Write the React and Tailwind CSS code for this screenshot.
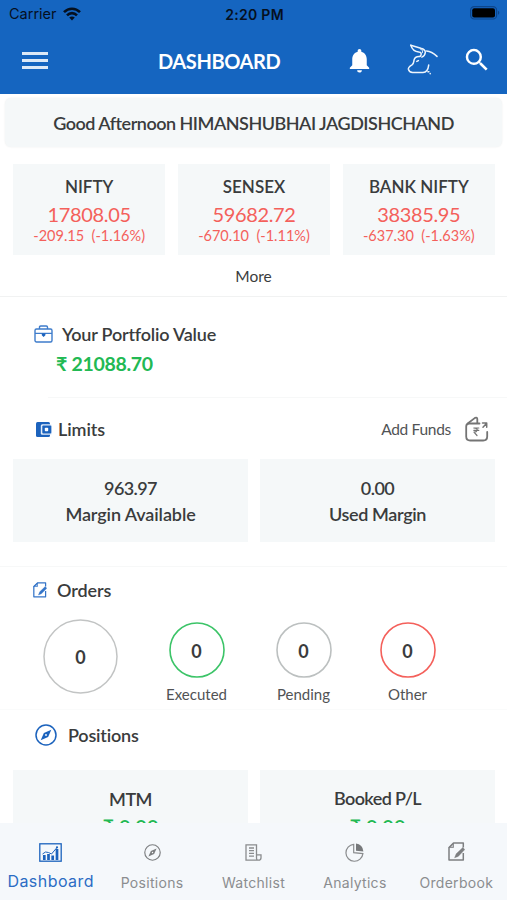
import { useState } from "react";
import { MdNotifications, MdSearch } from "react-icons/md";

// Market indices shown at the top of the dashboard
const indices = [
  { name: "NIFTY", value: "17808.05", change: "-209.15", percent: "(-1.16%)" },
  { name: "SENSEX", value: "59682.72", change: "-670.10", percent: "(-1.11%)" },
  { name: "BANK NIFTY", value: "38385.95", change: "-637.30", percent: "(-1.63%)" },
];

const orders = [
  { label: "Executed", count: 0, ring: "#3cc468", box: "w-[107px]" },
  { label: "Pending", count: 0, ring: "#bcc0c0", box: "w-[107px]" },
  { label: "Other", count: 0, ring: "#f4605b", box: "w-[101px]" },
];

/* ---------- Icons ---------- */

function WifiIcon() {
  return (
    <svg width="18" height="14" viewBox="0 0 18 14" fill="none" stroke="#05101f" strokeWidth="2.6">
      <path d="M1 5.2C5.6 .6 12.4 .6 17 5.2" />
      <path d="M4 8.3c2.9-2.9 7.1-2.9 10 0" />
      <path d="M9 13.4 6.2 10.6c1.6-1.5 4-1.5 5.6 0z" fill="#05101f" stroke="none" />
    </svg>
  );
}

function BatteryIcon() {
  return (
    <svg width="30" height="14" viewBox="0 0 30 14">
      <rect x=".6" y=".6" width="26" height="12.4" rx="3.6" fill="none" stroke="#0d468c" strokeWidth="1.2" />
      <rect x="2.2" y="2.2" width="22.8" height="9.2" rx="2" fill="#000" />
      <path d="M28 4.8c1.8.8 1.8 3.2 0 4z" fill="#0d468c" />
    </svg>
  );
}

function BullIcon() {
  return (
    <svg width="33" height="32" viewBox="0 0 33 32" fill="none" stroke="#eef5fc" strokeWidth="1.5" strokeLinecap="round" strokeLinejoin="round">
      <path d="M5.8 1.2 15.8 4.3c3 .8 4.7 2 4.5 4.2-.2 2.2-1.6 3.9-3.5 4.6" />
      <path d="M5.8 1.2c1.2 3.8 3.6 6.3 8 6.9 2.6.2 3.2 2 1.4 4.2" />
      <path d="M15.6 5.2c2 .6 2.4 2 1.7 3.6" strokeWidth="1" />
      <path d="M21.6 6.9c3.8.2 7 2.2 10.4 5.5" />
      <path d="M14.6 12.6c-3.3-.2-5 1.2-5.6 3.6-.4 2.3-.2 3.4-2 4.6-2.4 1.5-4 2.6-3.6 4.4.5 1.8 1.8 3 4.2 3.300h10.400c3.200-.2 5.200-3 5.700-7.400" />
      <path d="M11.8 17.4l1.6-.8M22.900 27.800h1M25.200 29.500v.2" />
    </svg>
  );
}

function BriefcaseIcon() {
  return (
    <svg width="19" height="18" viewBox="0 0 19 18" fill="none" stroke="#3e7ccb" strokeWidth="1.4">
      <rect x="1" y="4" width="17" height="13" rx="1.5" />
      <path d="M5.5 4V2.2Q5.5 1 6.7 1h5.6q1.2 0 1.2 1.2V4M1 8.4h17" />
      <path d="M7.8 8.4h3.6v1.8L9.6 12l-1.8-1.8z" fill="#1c63bd" stroke="none" />
    </svg>
  );
}

function WalletIcon() {
  return (
    <svg width="16" height="15" viewBox="0 0 16 15">
      <rect width="14" height="15" rx="1.5" fill="#1c63bd" />
      <rect x="4.8" y="2.3" width="11.2" height="10.4" rx="1.5" fill="#e4eefa" />
      <rect x="6.3" y="3.5" width="9" height="8" rx="1" fill="#1c63bd" />
      <rect x="8.8" y="5.8" width="3.4" height="3.4" rx=".8" fill="#fff" />
    </svg>
  );
}

function AddFundsIcon() {
  return (
    <svg width="24" height="26" viewBox="0 0 24 26" fill="none" stroke="#747474" strokeWidth="1.8" strokeLinecap="round" strokeLinejoin="round">
      <path d="M14.5 7.5H4.2Q1.2 7.5 1.2 10.5v10q0 4 4 4h13q4 0 4-4V16" />
      <path d="M3 7.2 10 1.9q2.3-1 2.3 1.2V7.2" />
      <path d="M18 11.2 21.6 7.3M17.5 7h4.2v4.2" strokeWidth="1.5" />
      <path d="M8.8 12h5M8.8 14.3h5M8.8 12q3.8 0 3.3 2.3-.5 1.9-3.1 1.9l3 3.3" strokeWidth="1.2" />
    </svg>
  );
}

// Sheet of paper with a pen, shared by the orders title and the tab bar
function OrderSheetIcon({ size, color }) {
  return (
    <svg width={size} height={size * 1.12} viewBox="0 0 17 19" fill="none" stroke={color} strokeWidth="1.5" strokeLinejoin="round">
      <path d="M15.3 11V18H1V5.5L5.5 1h9.8v4.5" />
      <path d="M1 5.5h4.5V1z" fill={color} fillOpacity=".45" strokeWidth=".8" />
      <path d="M6.6 15.8 8.2 11.8l6.6-6.2 2 2-6.6 6.8z" fill={color} strokeWidth=".4" />
    </svg>
  );
}

function CompassIcon({ size, color, width }) {
  return (
    <svg width={size} height={size} viewBox="0 0 22 22" fill="none" stroke={color} strokeWidth={width}>
      <circle cx="11" cy="11" r="10" />
      <path d="M16.300 5.700 8.900 8.900 5.700 16.300l7.400-3.200z" fill={color} stroke="none" />
      <circle cx="11" cy="11" r=".9" fill="#fff" stroke="none" />
    </svg>
  );
}

function ChartIcon() {
  return (
    <svg width="23" height="19" viewBox="0 0 23 19" fill="none" stroke="#1c63bd" strokeWidth="1.3">
      <rect x=".8" y=".8" width="21.4" height="17.4" />
      <path d="M5.3 17v-5M9.5 17v-6M13.700 17v-4.500M18 17V6" strokeWidth="2.7" />
      <path d="m3.5 11 3-2 3 .5 3 1.5 5.500-6.500" strokeWidth="1" />
      <circle cx="18" cy="4.3" r="1.1" fill="#1c63bd" stroke="none" />
    </svg>
  );
}

function WatchlistIcon() {
  return (
    <svg width="17" height="17" viewBox="0 0 17 17" fill="none" stroke="#8a8c8e" strokeWidth="1.3">
      <path d="M11.5 10.500V.8H1v15.400h12.500q2.500 0 2.500-2.500v-2.900h-4.500v3.400q0 2 1.500 2" />
      <path d="M4 4h5M4 6.700h5M4 9.400h5M4 12.100h5" />
    </svg>
  );
}

function PieIcon() {
  return (
    <svg width="19" height="19" viewBox="0 0 19 19" fill="none" stroke="#8a8c8e" strokeWidth="1.2">
      <path d="M8.7 1.3a8.5 8.5 0 1 0 9.2 9.3l-9.2-.9z" />
      <path d="M11 .6a8 8 0 0 1 7.4 7.8L11 7.8z" fill="#77797b" stroke="none" />
    </svg>
  );
}

const tabs = [
  { name: "Dashboard", icon: <ChartIcon /> },
  { name: "Positions", icon: <CompassIcon size={17} color="#7d7f81" width={1.5} /> },
  { name: "Watchlist", icon: <WatchlistIcon /> },
  { name: "Analytics", icon: <PieIcon /> },
  { name: "Orderbook", icon: <OrderSheetIcon size={17} color="#7d7f81" /> },
];

/* ---------- Sections ---------- */

function Header() {
  return (
    <header className="h-[94px] shrink-0 bg-[#1565c0]">
      {/* Phone status bar */}
      <div className="grid h-7 grid-cols-3 items-center pl-[9px] pr-[7px] font-['Inter'] text-[#05101f]">
        <div className="flex items-center gap-[6px] text-[14.5px]">
          Carrier
          <WifiIcon />
        </div>
        <span className="text-center text-[14px] font-semibold tracking-[0.3px]">2:20 PM</span>
        <div className="flex justify-end pb-[2px]">
          <BatteryIcon />
        </div>
      </div>

      <div className="flex h-[64px] items-center text-white">
        <button className="ml-[22px] flex w-[26px] flex-col gap-[4px]" aria-label="Menu">
          <span className="h-[3px] bg-[#dce9f7]"></span>
          <span className="h-[3px] bg-[#dce9f7]"></span>
          <span className="h-[3px] bg-[#dce9f7]"></span>
        </button>
        <h1 className="ml-[110px] w-[122px] whitespace-nowrap pt-px text-[20px] font-bold leading-6 tracking-[-0.4px]">DASHBOARD</h1>
        <MdNotifications className="ml-[65px] size-[29px]" />
        <div className="ml-[31px]">
          <BullIcon />
        </div>
        <MdSearch className="ml-[24px] size-[30px]" />
      </div>
    </header>
  );
}

function IndexCard({ item }) {
  return (
    <div className="flex h-[91px] flex-1 flex-col items-center bg-[#f5f8f9] pt-[12px]">
      <h2 className="text-[17px] font-semibold leading-[22px]">{item.name}</h2>
      <p className="mt-[5px] text-[20px] leading-[22px] tracking-[-0.35px] text-[#f4605b]">{item.value}</p>
      <p className="mt-px text-[14.5px] leading-[19px] text-[#f4605b]">
        {item.change}&nbsp; {item.percent}
      </p>
    </div>
  );
}

// Round counter, the ring colour depends on the kind of order
function Counter({ size, color, width, children }) {
  return (
    <div className="grid place-items-center self-start text-[18px] font-bold">
      <svg className="col-start-1 row-start-1" width={size} height={size} fill="none" stroke={color} strokeWidth={width}>
        <circle cx={size / 2} cy={size / 2} r={size / 2 - 1} />
      </svg>
      <span className="col-start-1 row-start-1 pt-px leading-none">{children}</span>
    </div>
  );
}

export default function App() {
  const [activeTab, setActiveTab] = useState("Dashboard");

  return (
    <div className="flex h-[900px] w-[507px] flex-col overflow-hidden bg-white font-['Lato',sans-serif] text-[#3a3c3d] [font-variant-ligatures:none]">
      <Header />

      <main className="flex min-h-0 flex-1 flex-col overflow-hidden *:shrink-0">
        {/* Greeting */}
        <div className="mx-[5px] mt-[4px] flex h-[49px] items-center justify-center whitespace-nowrap rounded-md bg-[#f5f8f9] pt-px text-[18px] font-semibold tracking-[-0.5px] shadow-[0_0_2px_rgba(0,0,0,0.08)]">
          Good Afternoon HIMANSHUBHAI JAGDISHCHAND
        </div>

        {/* Market indices */}
        <section className="border-b border-[#f1f2f2]">
          <div className="ml-[13px] mr-3 mt-[17px] flex gap-[12.5px]">
            {indices.map((item) => (
              <IndexCard key={item.name} item={item} />
            ))}
          </div>
          <button className="block h-[41px] w-full text-[15.5px] leading-[43px]">More</button>
        </section>

        {/* Portfolio */}
        <section className="h-[101px] pt-[25px]">
          <div className="flex h-6 items-center gap-[9px] pl-[34px]">
            <BriefcaseIcon />
            <h2 className="text-[18px] font-semibold tracking-[-0.2px]">Your Portfolio Value</h2>
          </div>
          <p className="mt-[6px] pl-[56px] text-[19.5px] font-bold leading-6 tracking-[-0.3px] text-[#22b953]">₹ 21088.70</p>
          <hr className="ml-[48px] mt-[21px] border-[#f7f8f8]" />
        </section>

        {/* Limits */}
        <section className="h-[169px] border-b border-[#f7f8f8] pt-[18px]">
          <div className="flex h-[26px] items-center pl-[36px] pr-[18px]">
            <WalletIcon />
            <h2 className="ml-[6px] flex-1 text-[18px] font-semibold tracking-[-0.1px]">Limits</h2>
            <span className="mr-[14px] pt-px text-[15.5px] tracking-[-0.3px] text-[#515355]">Add Funds</span>
            <AddFundsIcon />
          </div>
          <div className="ml-[13px] mr-3 mt-[17px] flex gap-3 text-center text-[18px] font-semibold leading-[26px]">
            <div className="h-[83px] flex-1 bg-[#f5f8f9] pt-[16px]">
              <p className="tracking-[-0.6px]">963.97</p>
              <p className="tracking-[-0.1px]">Margin Available</p>
            </div>
            <div className="h-[83px] flex-1 bg-[#f5f8f9] pt-[16px]">
              <p className="tracking-[-0.5px]">0.00</p>
              <p className="tracking-[-0.35px]">Used Margin</p>
            </div>
          </div>
        </section>

        {/* Orders */}
        <section className="h-[143px] border-b border-[#fafbfb] pt-[11px]">
          <div className="flex h-6 items-center gap-[10px] pl-[33px]">
            <OrderSheetIcon size={14} color="#3474c8" />
            <h2 className="text-[18px] font-semibold tracking-[-0.1px]">Orders</h2>
          </div>
          <div className="mt-[17px] flex pl-[43px]">
            <Counter size={75} color="#c2c4c4" width={1.5}>0</Counter>
            <div className="ml-[25px] mt-[3px] flex">
              {orders.map((order) => (
                <div key={order.label} className={`flex flex-col items-center ${order.box}`}>
                  <div className="h-[56px]">
                    <Counter size={56} color={order.ring} width={1.6}>{order.count}</Counter>
                  </div>
                  <span className="mt-[6px] text-[15px] leading-5 text-[#515355]">{order.label}</span>
                </div>
              ))}
            </div>
          </div>
        </section>

        {/* Positions */}
        <section className="pt-[13px]">
          <div className="flex h-6 items-center gap-[11px] pl-[35px]">
            <CompassIcon size={22} color="#1c63bd" width={1.5} />
            <h2 className="text-[18px] font-semibold tracking-[-0.2px]">Positions</h2>
          </div>
          <div className="ml-[13px] mr-3 mt-[23px] flex gap-3 text-center text-[18px] font-semibold leading-[26px]">
            <div className="h-[83px] flex-1 bg-[#f5f8f9] pt-[16px]">
              <p className="tracking-[-0.5px]">MTM</p>
              <p className="mt-px text-[20px] text-[#22b953]">₹ 0.00</p>
            </div>
            <div className="h-[83px] flex-1 bg-[#f5f8f9] pt-[15px]">
              <p className="tracking-[-0.6px]">Booked P/L</p>
              <p className="mt-[2px] text-[20px] text-[#22b953]">₹ 0.00</p>
            </div>
          </div>
        </section>
      </main>

      {/* Bottom tab bar */}
      <nav className="grid h-[77px] shrink-0 grid-cols-5 bg-[#f5f8fb] font-['Inter']">
        {tabs.map((tab) => (
          <button
            key={tab.name}
            onClick={() => setActiveTab(tab.name)}
            className={`flex flex-col items-center pt-[17px] ${activeTab === tab.name ? "text-[#2b6cc4]" : "text-[#8b8d8f]"}`}
          >
            <span className="flex h-6 items-center">{tab.icon}</span>
            <span className={activeTab === tab.name ? "mt-[7px] text-[16px] leading-5 tracking-[0.45px]" : "mt-[9px] text-[14px] leading-5 tracking-[0.3px]"}>
              {tab.name}
            </span>
          </button>
        ))}
      </nav>
    </div>
  );
}
